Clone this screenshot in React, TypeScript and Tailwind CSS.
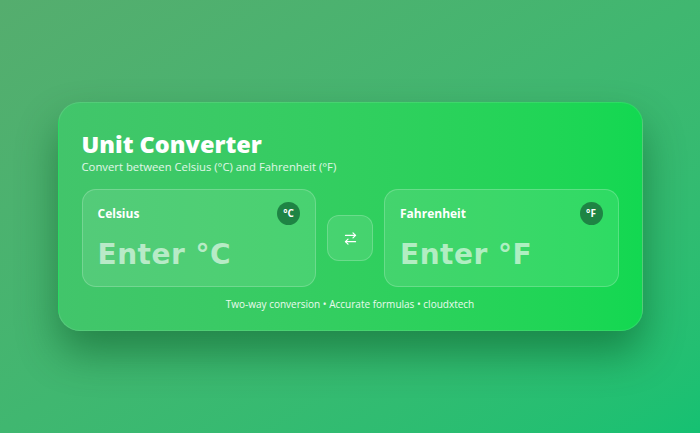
import React from "react";
import { ArrowRightLeft } from "lucide-react";

function Field({ label, unit, ph }: { label: string; unit: string; ph: string }) {
  return (
    <div className="flex-1 h-[98px] rounded-[14px] bg-white/10 border border-white/20 px-[15px] pt-[12px] flex flex-col">
      <div className="flex items-center justify-between h-[23px]">
        <span className="text-[12px] font-bold text-white">{label}</span>
        <span className="w-[23px] h-[23px] rounded-full bg-[#1e8444] text-white text-[10px] font-bold flex items-center justify-center">{unit}</span>
      </div>
      <input
        placeholder={ph}
        style={{ fontFamily: "'DejaVu Sans', Verdana, sans-serif" }}
        className="mt-[10px] w-full bg-transparent outline-none text-[28px] font-bold text-white placeholder:text-white/60 leading-[40px] tracking-[0.5px]"
      />
    </div>
  );
}

export default function App() {
  return (
    <div
      className="w-[700px] h-[433px] flex items-center justify-center bg-gradient-to-br from-[#55ad6e] to-[#15c172]"
      style={{ fontFamily: "'Open Sans', 'Noto Sans', sans-serif" }}
    >
      <div className="w-[585px] h-[229px] rounded-[22px] bg-gradient-to-r from-[#42c56b] to-[#12d851] border border-white/10 shadow-[0_22px_40px_rgba(0,70,25,0.45)] px-[23px] pt-[26px] flex flex-col">
        <h1 className="text-[23.5px] font-extrabold text-white leading-[30px]">Unit Converter</h1>
        <p className="text-[11.3px] text-white/85 leading-[14px] mt-[1px]">Convert between Celsius (°C) and Fahrenheit (°F)</p>
        <div className="flex items-center gap-[11px] mt-[15px]">
          <Field label="Celsius" unit="°C" ph="Enter °C" />
          <button className="w-[46px] h-[46px] shrink-0 rounded-[12px] bg-white/10 border border-white/20 flex items-center justify-center text-white">
            <ArrowRightLeft size={15} strokeWidth={2} />
          </button>
          <Field label="Fahrenheit" unit="°F" ph="Enter °F" />
        </div>
        <p className="text-center text-[10px] text-white/90 mt-[10px]">Two-way conversion • Accurate formulas • cloudxtech</p>
      </div>
    </div>
  );
}
